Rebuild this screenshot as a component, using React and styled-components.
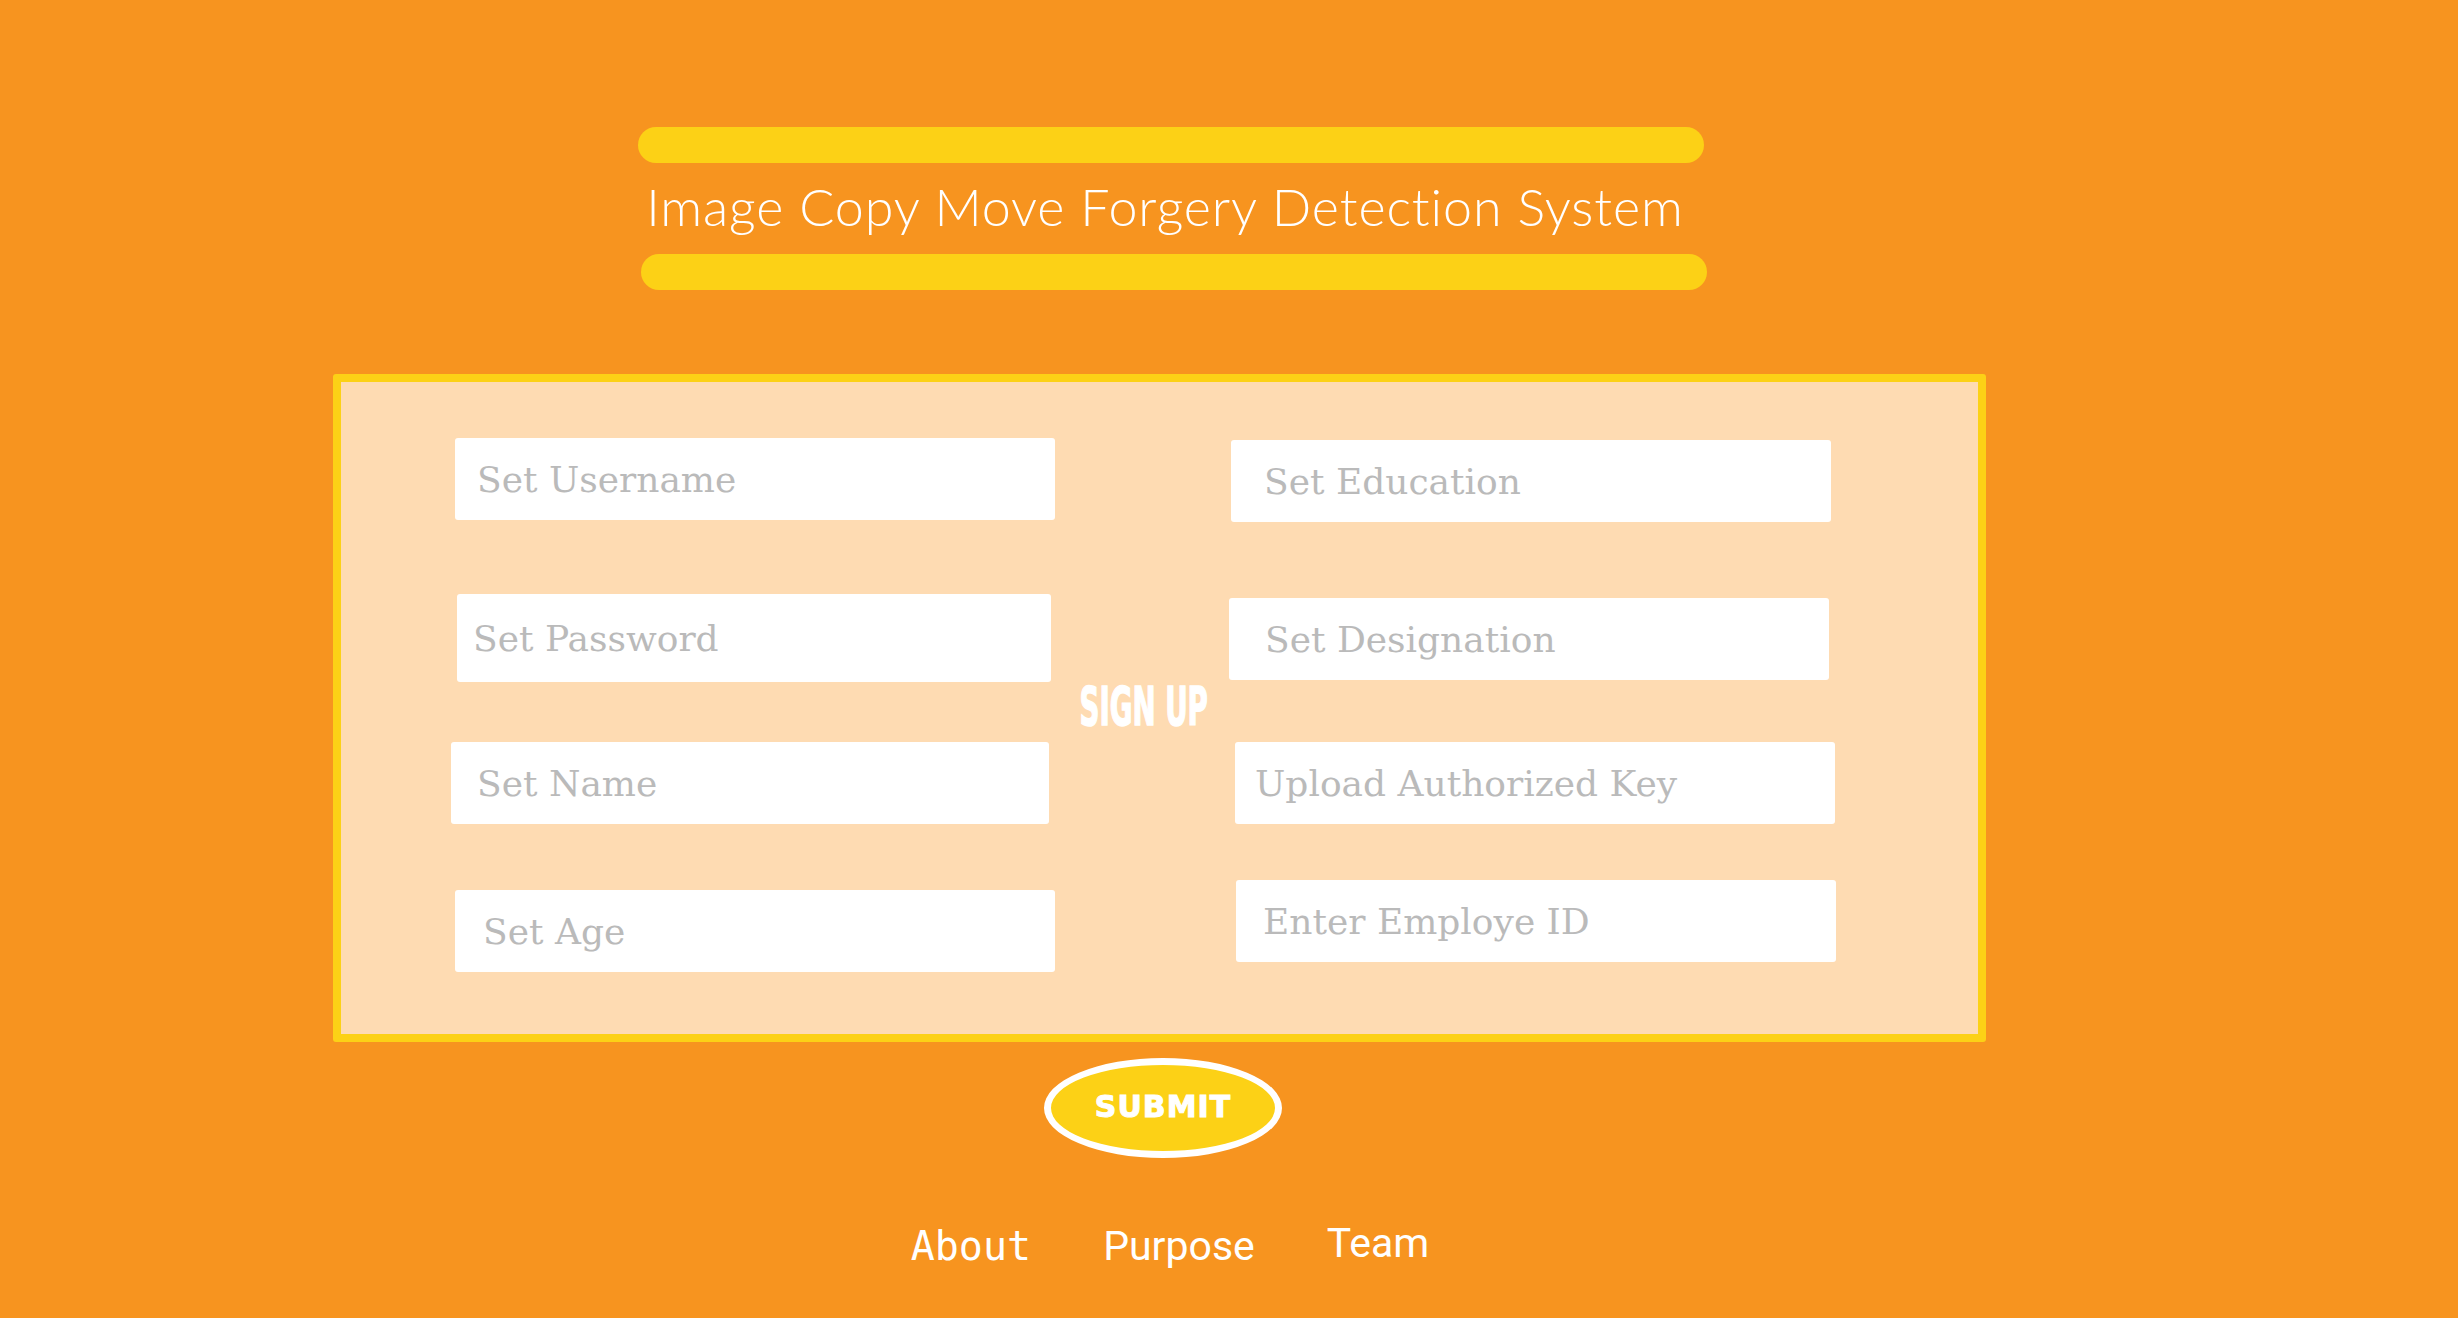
import React from 'react';
import styled, { createGlobalStyle } from 'styled-components';

const GlobalStyle = createGlobalStyle`
    html, body {
        margin: 0;
        padding: 0;
        background: #F7941F;
    }
    * {
        box-sizing: border-box;
    }
`

const Page = styled.div`
    width: 100%;
    min-height: 100vh;
    background: #F7941F;
    display: flex;
    flex-direction: column;
    align-items: center;
    padding: 127px 132px 0 0;
`

const Header = styled.header`
    width: 1066px;
    margin-left: 16px;
    display: flex;
    flex-direction: column;
    align-items: stretch;
`

const Bar = styled.div`
    height: 36px;
    border-radius: 18px;
    background: #FCD116;
    margin-left: ${p => p.$shift || 0}px;
    margin-right: ${p => -(p.$shift || 0)}px;
`

const Title = styled.h1`
    margin: 12px 0 17px;
    font-family: Lato, "Noto Sans", sans-serif;
    font-weight: 300;
    font-size: 52px;
    letter-spacing: 0.9px;
    line-height: 1.2;
    color: #ffffff;
    text-align: center;
    padding-right: 12px;
    white-space: nowrap;
`

const Panel = styled.form`
    width: 1653px;
    height: 668px;
    margin: 84px 7px 0 0;
    background: #FEDBB2;
    border: 8px solid #FCD116;
    border-radius: 3px;
    padding: 56px 0 0 114px;
`

const Grid = styled.div`
    display: grid;
    grid-template-columns: 598px 178px 603px;
    grid-template-rows: repeat(4, 82px);
    row-gap: 67px;
    align-items: start;
`

const SignUp = styled.div`
    grid-column: 2;
    grid-row: 1 / -1;
    align-self: center;
    justify-self: center;
    margin: 8px 0 0 4px;
    font-family: "DejaVu Sans Condensed", "DejaVu Sans", sans-serif;
    font-weight: 700;
    font-size: 53px;
    line-height: 1;
    color: #ffffff;
    -webkit-text-stroke: 1.5px #ffffff;
    white-space: nowrap;
    transform: scaleX(0.58);
`

const Field = styled.input`
    grid-column: ${p => p.$col};
    width: ${p => p.$w || 600}px;
    height: ${p => p.$h || 82}px;
    margin: ${p => p.$dy || 0}px 0 0 ${p => p.$dx || 0}px;
    border: none;
    border-radius: 3px;
    background: #ffffff;
    padding: 0 0 0 ${p => p.$indent}px;
    font-family: "DejaVu Serif", "Liberation Serif", serif;
    font-size: 36px;
    color: #555;
    outline: none;

    &::placeholder {
        color: #bababa;
    }
`

const SubmitButton = styled.button`
    width: 238px;
    height: 100px;
    margin-top: 16px;
    border-radius: 50%;
    border: 7px solid #ffffff;
    background: #FCD116;
    color: #ffffff;
    font-family: "DejaVu Sans", sans-serif;
    font-weight: 700;
    font-size: 30px;
    letter-spacing: 1px;
    -webkit-text-stroke: 1px #ffffff;
    padding: 0 0 4px;
    cursor: pointer;
`

const Footer = styled.nav`
    display: flex;
    align-items: flex-start;
    gap: 72px;
    margin: 64px 0 0 14px;
`

const Link = styled.a`
    font-family: ${p => p.$mono ? '"DejaVu Sans Mono", monospace' : 'Roboto, "Noto Sans", sans-serif'};
    font-size: ${p => p.$mono ? 40 : 41}px;
    line-height: 48px;
    margin-top: ${p => p.$dy || 0}px;
    color: #ffffff;
    text-decoration: none;
    cursor: pointer;
`

const fields = [
    { ph: 'Set Username', col: 1, dx: 0, dy: 0, indent: 22 },
    { ph: 'Set Education', col: 3, dx: 0, dy: 2, indent: 33 },
    { ph: 'Set Password', col: 1, dx: 2, dy: 7, h: 88, w: 594, indent: 16 },
    { ph: 'Set Designation', col: 3, dx: -2, dy: 11, indent: 36 },
    { ph: 'Set Name', col: 1, dx: -4, dy: 6, w: 598, indent: 26 },
    { ph: 'Upload Authorized Key', col: 3, dx: 4, dy: 6, indent: 20 },
    { ph: 'Set Age', col: 1, dx: 0, dy: 5, indent: 28 },
    { ph: 'Enter Employe ID', col: 3, dx: 5, dy: -5, indent: 27 },
]

export default function App() {
    return (
        <>
            <GlobalStyle />
            <Page>
                <Header>
                    <Bar />
                    <Title>Image Copy Move Forgery Detection System</Title>
                    <Bar $shift={3} />
                </Header>
                <Panel onSubmit={e => e.preventDefault()}>
                    <Grid>
                        {fields.map(f => (
                            <Field
                                key={f.ph}
                                placeholder={f.ph}
                                $col={f.col}
                                $dx={f.dx}
                                $dy={f.dy}
                                $w={f.w}
                                $h={f.h}
                                $indent={f.indent}
                            />
                        ))}
                        <SignUp>SIGN UP</SignUp>
                    </Grid>
                </Panel>
                <SubmitButton type="button">SUBMIT</SubmitButton>
                <Footer>
                    <Link $mono>About</Link>
                    <Link>Purpose</Link>
                    <Link $dy={-3}>Team</Link>
                </Footer>
            </Page>
        </>
    )
}
